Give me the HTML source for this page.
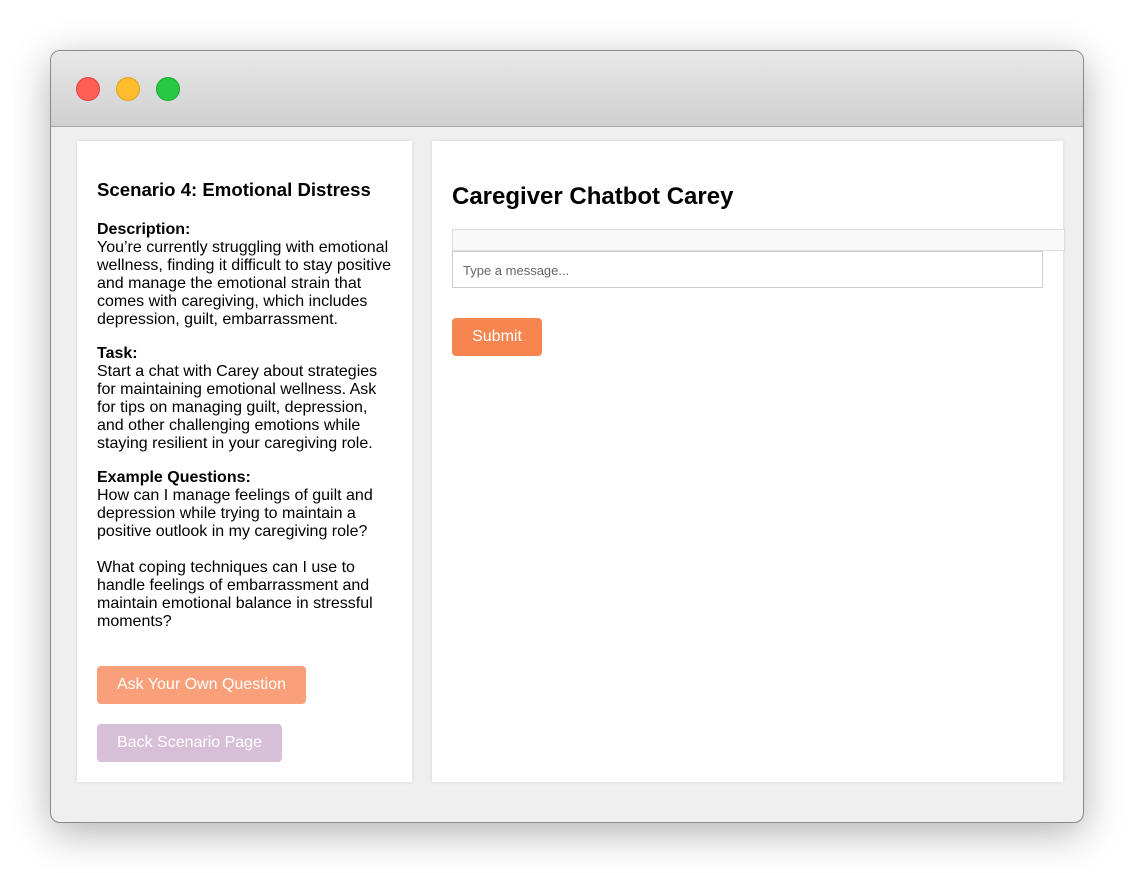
<!DOCTYPE html>
<html><head><meta charset="utf-8"><style>
*{box-sizing:border-box;margin:0;padding:0}
body{width:1134px;height:873px;background:#fff;font-family:"Liberation Sans",Arial,sans-serif;position:relative;overflow:hidden}
.win{position:absolute;left:50px;top:50px;width:1034px;height:773px;border:1px solid #8a8a8a;border-radius:10px;background:#efefef;box-shadow:0 10px 40px rgba(0,0,0,.3);overflow:hidden}
.bar{height:76px;background:linear-gradient(#e8e8e8,#d0d0d0);border-bottom:1px solid #a8a8a8;position:relative}
.dot{position:absolute;top:26px;width:24px;height:24px;border-radius:50%}
.left{position:absolute;left:26px;top:90px;width:335px;height:641px;background:#fff;box-shadow:0 0 4px rgba(0,0,0,.1);padding:40px 20px;font-size:16px;line-height:18px;color:#000}
.left h3{font-size:18.6px;margin-bottom:22px}
.left p{margin-bottom:16px}
.left p.q2{margin-top:18px}
.btn{position:absolute;left:20px;height:38px;border-radius:4px;color:#fff;font-size:16px;line-height:38px;padding:0 20px}
.right{position:absolute;left:381px;top:90px;width:631px;height:641px;background:#fff;box-shadow:0 0 4px rgba(0,0,0,.1)}
.right h2{position:absolute;left:20px;top:42px;font-size:24px}
.msgs{position:absolute;left:20px;top:88px;width:613px;height:22px;background:#f9f9f9;border:1px solid #ddd}
.inp{position:absolute;left:20px;top:110px;width:591px;height:37px;border:1px solid #ccc;font-size:13px;color:#666;padding:11px 10px}
.sub{position:absolute;left:20px;top:177px;width:90px;height:38px;background:#f78550;border-radius:4px;color:#fff;font-size:16px;text-align:center;line-height:38px}
</style></head><body>
<div class="win">
<div class="bar">
<div class="dot" style="left:25px;background:#fe5f57;border:1px solid #e0443e"></div>
<div class="dot" style="left:65px;background:#febc2e;border:1px solid #dea123"></div>
<div class="dot" style="left:105px;background:#28c840;border:1px solid #1aab29"></div>
</div>
<div class="left">
<h3>Scenario 4: Emotional Distress</h3>
<p><b>Description:</b><br>You’re currently struggling with emotional wellness, finding it difficult to stay positive and manage the emotional strain that comes with caregiving, which includes depression, guilt, embarrassment.</p>
<p><b>Task:</b><br>Start a chat with Carey about strategies for maintaining emotional wellness. Ask for tips on managing guilt, depression, and other challenging emotions while staying resilient in your caregiving role.</p>
<p><b>Example Questions:</b><br>How can I manage feelings of guilt and depression while trying to maintain a positive outlook in my caregiving role?</p>
<p class="q2">What coping techniques can I use to handle feelings of embarrassment and maintain emotional balance in stressful moments?</p>
<div class="btn" style="top:525px;background:#f9a07a">Ask Your Own Question</div>
<div class="btn" style="top:583px;background:#d8bfd8">Back Scenario Page</div>
</div>
<div class="right">
<h2>Caregiver Chatbot Carey</h2>
<div class="msgs"></div>
<div class="inp">Type a message...</div>
<div class="sub">Submit</div>
</div>
</div>
</body></html>
